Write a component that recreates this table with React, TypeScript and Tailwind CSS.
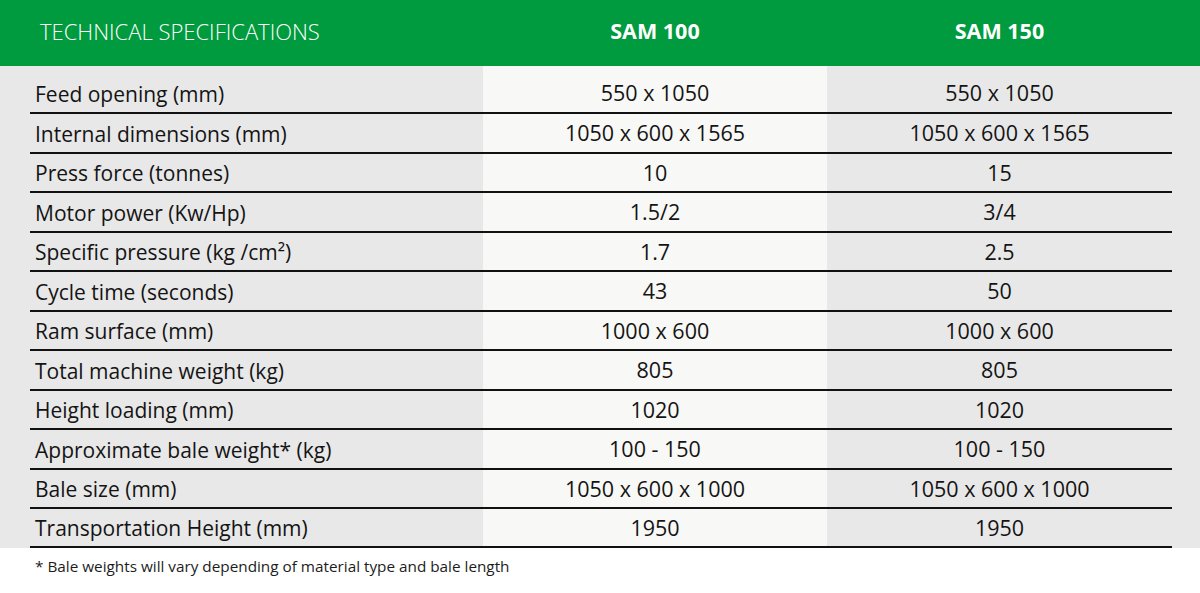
import React from "react";

const rows: [string, string, string][] = [
  ["Feed opening (mm)", "550 x 1050", "550 x 1050"],
  ["Internal dimensions (mm)", "1050 x 600 x 1565", "1050 x 600 x 1565"],
  ["Press force (tonnes)", "10", "15"],
  ["Motor power (Kw/Hp)", "1.5/2", "3/4"],
  ["Specific pressure (kg /cm²)", "1.7", "2.5"],
  ["Cycle time (seconds)", "43", "50"],
  ["Ram surface (mm)", "1000 x 600", "1000 x 600"],
  ["Total machine weight (kg)", "805", "805"],
  ["Height loading (mm)", "1020", "1020"],
  ["Approximate bale weight* (kg)", "100 - 150", "100 - 150"],
  ["Bale size (mm)", "1050 x 600 x 1000", "1050 x 600 x 1000"],
  ["Transportation Height (mm)", "1950", "1950"],
];

const heights = [
  "h-[48px] pt-2",
  "h-[40px]",
  "h-[39px]",
  "h-[40px]",
  "h-[39px]",
  "h-[40px]",
  "h-[39px]",
  "h-[40px]",
  "h-[39px]",
  "h-[40px]",
  "h-[39px]",
  "h-[39px]",
];

export default function App() {
  return (
    <div
      className="w-[1200px] h-[593px] bg-white text-[#141414] overflow-hidden"
      style={{ fontFamily: '"Open Sans", "Liberation Sans", sans-serif' }}
    >
      <div className="h-[66px] bg-[#009b3e] text-white pl-[30px] pb-[3px] grid grid-cols-[453px_344px_345px] items-center">
        <div className="pl-[10px] text-[22px] font-light">TECHNICAL SPECIFICATIONS</div>
        <div className="text-center text-[21.5px] font-bold">SAM 100</div>
        <div className="text-center text-[21.5px] font-bold">SAM 150</div>
      </div>
      <div className="bg-[#e8e8e8] pl-[30px]">
        <div className="grid grid-cols-[453px_344px_345px]">
          {rows.map((r, i) => (
            <React.Fragment key={i}>
              <div className={`${heights[i]} border-b-2 border-[#111] flex items-center pl-[5px] text-[21px]`}>
                <span className="pt-[3px]">{r[0]}</span>
              </div>
              <div className={`${heights[i]} border-b-2 border-[#111] bg-[#f8f8f6] flex items-center justify-center text-[21.5px]`}>
                <span className="pt-[1px]">{r[1]}</span>
              </div>
              <div className={`${heights[i]} border-b-2 border-[#111] flex items-center justify-center text-[21.5px]`}>
                <span className="pt-[1px]">{r[2]}</span>
              </div>
            </React.Fragment>
          ))}
        </div>
      </div>
      <div className="pl-[35px] pt-[7px] text-[15.3px] text-[#1c1c1c]">
        * Bale weights will vary depending of material type and bale length
      </div>
    </div>
  );
}
